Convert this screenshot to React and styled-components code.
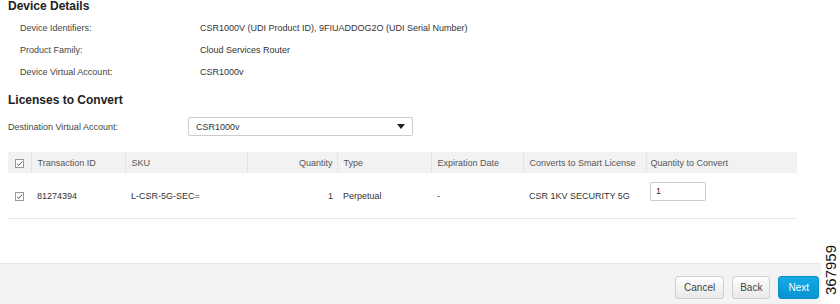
import styled, { createGlobalStyle } from "styled-components";

const GlobalStyle = createGlobalStyle`
  html, body {
    margin: 0;
    padding: 0;
    background: #fff;
  }
  body {
    font-family: "Liberation Sans", Arial, sans-serif;
    color: #333;
  }
`;

const Page = styled.div`
  position: relative;
  width: 840px;
  height: 304px;
  display: flex;
  flex-direction: column;
  overflow: hidden;
`;

const Main = styled.div`
  padding: 0 8px;
`;

const SectionTitle = styled.h3`
  margin: ${(p) => p.$top || 0}px 0 0;
  font-size: 12px;
  line-height: 13px;
  font-weight: bold;
  color: #222;
`;

const DetailList = styled.div`
  display: flex;
  flex-direction: column;
  padding: 4px 0 0 12px;
`;

const DetailRow = styled.div`
  display: grid;
  grid-template-columns: 180px 1fr;
  height: 22px;
  align-items: center;
  font-size: 9px;
  color: #333;
`;

const Label = styled.span`
  color: #444;
`;

const FieldRow = styled.div`
  display: grid;
  grid-template-columns: 180px 225px;
  align-items: center;
  margin-top: 10px;
  font-size: 9px;
`;

const Select = styled.div`
  box-sizing: border-box;
  height: 19px;
  display: flex;
  align-items: center;
  justify-content: space-between;
  padding: 0 6px 0 7px;
  border: 1px solid #ccc;
  border-radius: 2px;
  color: #333;
  font-size: 9px;
`;

const Caret = styled.span`
  width: 0;
  height: 0;
  border-left: 4.5px solid transparent;
  border-right: 4.5px solid transparent;
  border-top: 5px solid #222;
  margin-right: 1px;
`;

const Table = styled.table`
  margin-top: 16px;
  width: 789px;
  border-collapse: collapse;
  table-layout: fixed;
  font-size: 9px;
`;

const Th = styled.th`
  height: 21px;
  padding: 0 ${(p) => (p.$right ? "4px" : "0")} 0 ${(p) => p.$pad ?? 6}px;
  background: #f2f2f2;
  border-left: ${(p) => (p.$first ? "none" : "1px solid #e4e4e4")};
  text-align: ${(p) => (p.$right ? "right" : "left")};
  font-weight: normal;
  color: #555;
  white-space: nowrap;
`;

const Td = styled.td`
  height: 45px;
  padding: 0 ${(p) => (p.$right ? "4px" : "0")} 0 ${(p) => p.$pad ?? 6}px;
  border-bottom: 1px solid #e6e6e6;
  text-align: ${(p) => (p.$right ? "right" : "left")};
  vertical-align: middle;
  color: #333;
  white-space: nowrap;
`;

const CheckBox = styled.svg`
  display: block;
  width: 9px;
  height: 9px;
  margin-top: ${(p) => p.$shift || 0}px;
`;

const QtyInput = styled.div`
  box-sizing: border-box;
  width: 56px;
  height: 19px;
  margin-bottom: 8px;
  padding: 3px 5px 0;
  border: 1px solid #ccc;
  border-radius: 2px;
  background: #fff;
  font-size: 9px;
  line-height: 11px;
  color: #333;
`;

const Footer = styled.div`
  margin-top: auto;
  margin-right: 19px;
  height: 41px;
  box-sizing: border-box;
  padding: 12px 2px 0 0;
  display: flex;
  justify-content: flex-end;
  align-items: flex-start;
  gap: 8px;
  background: #f3f3f3;
  border-top: 1px solid #e6e6e6;
`;

const Button = styled.button`
  height: 23px;
  padding: 0 ${(p) => p.$px || 8}px;
  font-family: "Liberation Sans", Arial, sans-serif;
  font-size: 10px;
  border-radius: 3px;
  border: 1px solid ${(p) => (p.$primary ? "#0b8fc7" : "#cfcfcf")};
  color: ${(p) => (p.$primary ? "#fff" : "#444")};
  background: ${(p) =>
    p.$primary
      ? "linear-gradient(#14aae6, #0793d1)"
      : "linear-gradient(#fdfdfd, #e9e9e9)"};
`;

const FigureId = styled.div`
  position: absolute;
  right: -16px;
  bottom: 27px;
  transform: rotate(-90deg);
  font-size: 15px;
  line-height: 14px;
  color: #111;
`;

const Check = ({ shift }) => (
  <CheckBox viewBox="0 0 9 9" $shift={shift}>
    <rect x="0.5" y="0.5" width="8" height="8" fill="#fff" stroke="#9a9a9a" />
    <path d="M2 4.6 L3.8 6.3 L7.2 2.6" fill="none" stroke="#444" strokeWidth="0.9" />
  </CheckBox>
);

const details = [
  ["Device Identifiers:", "CSR1000V (UDI Product ID), 9FIUADDOG2O (UDI Serial Number)"],
  ["Product Family:", "Cloud Services Router"],
  ["Device Virtual Account:", "CSR1000v"],
];

const cols = [23, 94, 122, 90, 94, 92, 123, 151];

export default function App() {
  return (
    <Page>
      <GlobalStyle />
      <Main>
        <SectionTitle>Device Details</SectionTitle>
        <DetailList>
          {details.map(([k, v]) => (
            <DetailRow key={k}>
              <Label>{k}</Label>
              <span>{v}</span>
            </DetailRow>
          ))}
        </DetailList>

        <SectionTitle $top={11}>Licenses to Convert</SectionTitle>
        <FieldRow>
          <Label>Destination Virtual Account:</Label>
          <Select>
            CSR1000v
            <Caret />
          </Select>
        </FieldRow>

        <Table>
          <colgroup>
            {cols.map((w, i) => (
              <col key={i} style={{ width: w }} />
            ))}
          </colgroup>
          <thead>
            <tr>
              <Th $first $pad={7}>
                <Check shift={1} />
              </Th>
              <Th>Transaction ID</Th>
              <Th>SKU</Th>
              <Th $right>Quantity</Th>
              <Th>Type</Th>
              <Th>Expiration Date</Th>
              <Th>Converts to Smart License</Th>
              <Th $pad={4}>Quantity to Convert</Th>
            </tr>
          </thead>
          <tbody>
            <tr>
              <Td $pad={7}>
                <Check shift={2} />
              </Td>
              <Td>81274394</Td>
              <Td>L-CSR-5G-SEC=</Td>
              <Td $right>1</Td>
              <Td>Perpetual</Td>
              <Td>-</Td>
              <Td>CSR 1KV SECURITY 5G</Td>
              <Td $pad={4}>
                <QtyInput>1</QtyInput>
              </Td>
            </tr>
          </tbody>
        </Table>
      </Main>

      <Footer>
        <Button>Cancel</Button>
        <Button $px={7}>Back</Button>
        <Button $primary $px={9}>Next</Button>
      </Footer>
      <FigureId>367959</FigureId>
    </Page>
  );
}
